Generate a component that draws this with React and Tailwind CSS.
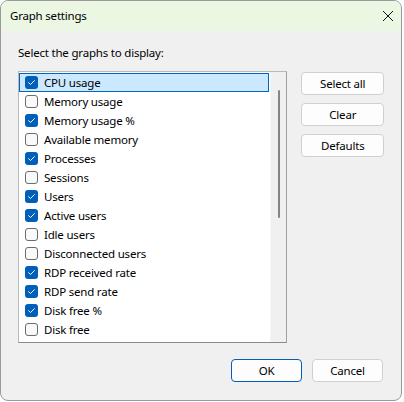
const GRAPHS = [
  { label: 'CPU usage', checked: true, selected: true },
  { label: 'Memory usage', checked: false },
  { label: 'Memory usage %', checked: true },
  { label: 'Available memory', checked: false },
  { label: 'Processes', checked: true },
  { label: 'Sessions', checked: false },
  { label: 'Users', checked: true },
  { label: 'Active users', checked: true },
  { label: 'Idle users', checked: false },
  { label: 'Disconnected users', checked: false },
  { label: 'RDP received rate', checked: true },
  { label: 'RDP send rate', checked: true },
  { label: 'Disk free %', checked: true },
  { label: 'Disk free', checked: false },
];

function CheckBox({ checked }) {
  if (checked) {
    return (
      <span className="w-[13px] h-[13px] rounded-[3px] bg-[#005fb8] flex items-center justify-center shrink-0">
        <svg width="13" height="13" viewBox="0 0 13 13" fill="none">
          <path d="M3.6 6.7 L5.5 8.5 L9.4 4.6" stroke="white" strokeWidth="1" strokeLinecap="round" strokeLinejoin="round" />
        </svg>
      </span>
    );
  }
  return <span className="w-[13px] h-[13px] rounded-[3px] border border-[#6b6b6b] bg-[#f9f9f9] shrink-0" />;
}

function Button({ children, primary = false, className = '' }) {
  return (
    <button
      className={`h-[23px] rounded-[4px] bg-[#fdfdfd] border text-[11.5px] tracking-[-0.2px] text-black flex items-center justify-center ${primary ? 'border-[#005fb8]' : 'border-[#d0d0d0]'} ${className}`}
    >
      {children}
    </button>
  );
}

export default function App() {
  return (
    <div className="w-[404px] h-[402px] bg-white" style={{ fontFamily: '"Noto Sans", "Open Sans", sans-serif' }}>
      <div className="w-[402px] h-[401px] rounded-[8px] border border-[#9a9a9a] bg-[#f0f0f0] overflow-hidden flex flex-col">
        {/* Title bar */}
        <div className="h-[30px] bg-[#ebf6e3] flex items-center justify-between pl-[9px] pr-[7px] shrink-0">
          <span className="text-[11.5px] tracking-[-0.2px] text-black leading-none">Graph settings</span>
          <svg width="12" height="12" viewBox="0 0 12 12" fill="none">
            <path d="M1 1 L11 11 M11 1 L1 11" stroke="#111" strokeWidth="1" />
          </svg>
        </div>

        {/* Body */}
        <div className="flex flex-col px-[17px] pt-[14px]">
          <div className="text-[11.5px] tracking-[-0.2px] leading-[16px] text-black">Select the graphs to display:</div>
          <div className="flex gap-[14px] mt-[10px]">
            <div className="w-[271px] h-[272px] border border-[#b9b9b9] border-b-[#8a8a8a] border-r-[#a0a0a0] bg-white flex">
              <div className="flex-1 flex flex-col pt-px">
                {GRAPHS.map(g => (
                  <div
                    key={g.label}
                    className={`h-[19px] flex items-center gap-[6px] pl-[5px] ${g.selected ? 'bg-[#cce8ff] border border-[#0067c0] mr-px' : 'border border-transparent'}`}
                  >
                    <CheckBox checked={g.checked} />
                    <span className="text-[11.5px] tracking-[-0.2px] text-black leading-none whitespace-nowrap">{g.label}</span>
                  </div>
                ))}
              </div>
              <div className="w-[16px] bg-[#f0f0f0] border-l border-[#f7f7f7] flex justify-center pt-[18px]">
                <div className="w-[2px] h-[128px] bg-[#858585] rounded-full ml-px" />
              </div>
            </div>
            <div className="w-[83px] flex flex-col gap-[8px] mt-px">
              <Button>Select all</Button>
              <Button>Clear</Button>
              <Button>Defaults</Button>
            </div>
          </div>
          <div className="flex justify-end gap-[10px] mt-[16px] pr-px">
            <Button primary className="w-[71px]">OK</Button>
            <Button className="w-[71px]">Cancel</Button>
          </div>
        </div>
      </div>
    </div>
  );
}
